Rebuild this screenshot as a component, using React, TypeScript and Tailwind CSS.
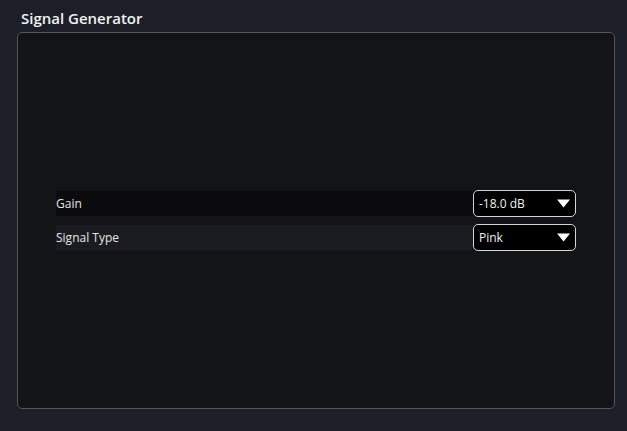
import React from "react";

function Caret() {
  return (
    <svg width="13" height="9" viewBox="0 0 13 9" className="shrink-0">
      <path d="M0 0.5 H13 L6.5 8.5 Z" fill="#ffffff" />
    </svg>
  );
}

function Dropdown({ value }: { value: string }) {
  return (
    <div className="flex h-[27px] w-[103px] shrink-0 items-center justify-between rounded-[5px] border border-[#d4d4d4] bg-black pl-[5px] pr-[5px] text-[12px] text-[#f0f0f0]">
      <span>{value}</span>
      <Caret />
    </div>
  );
}

function Row({ label, value, dark }: { label: string; value: string; dark?: boolean }) {
  return (
    <div
      className={
        "flex h-[25px] items-center justify-between text-[12px] text-[#e6e6e6] " +
        (dark ? "bg-[#0b0b0d]" : "bg-[#1a1b20]")
      }
    >
      <span>{label}</span>
      <Dropdown value={value} />
    </div>
  );
}

export default function App() {
  return (
    <div
      className="flex h-[431px] w-[627px] flex-col bg-[#1c1f28] pl-[17px] pr-[12px] pb-[22px]"
      style={{ fontFamily: '"Open Sans", "Noto Sans", sans-serif' }}
    >
      <div className="flex h-[32px] items-center pl-[4px] pt-[4px] text-[15px] font-semibold text-[#f2f2f2]">
        Signal Generator
      </div>
      <div className="flex flex-1 flex-col justify-center gap-[9px] rounded-[5px] border border-[#555659] bg-[#131418] px-[38px]">
        <Row label="Gain" value="-18.0 dB" dark />
        <Row label="Signal Type" value="Pink" />
      </div>
    </div>
  );
}
